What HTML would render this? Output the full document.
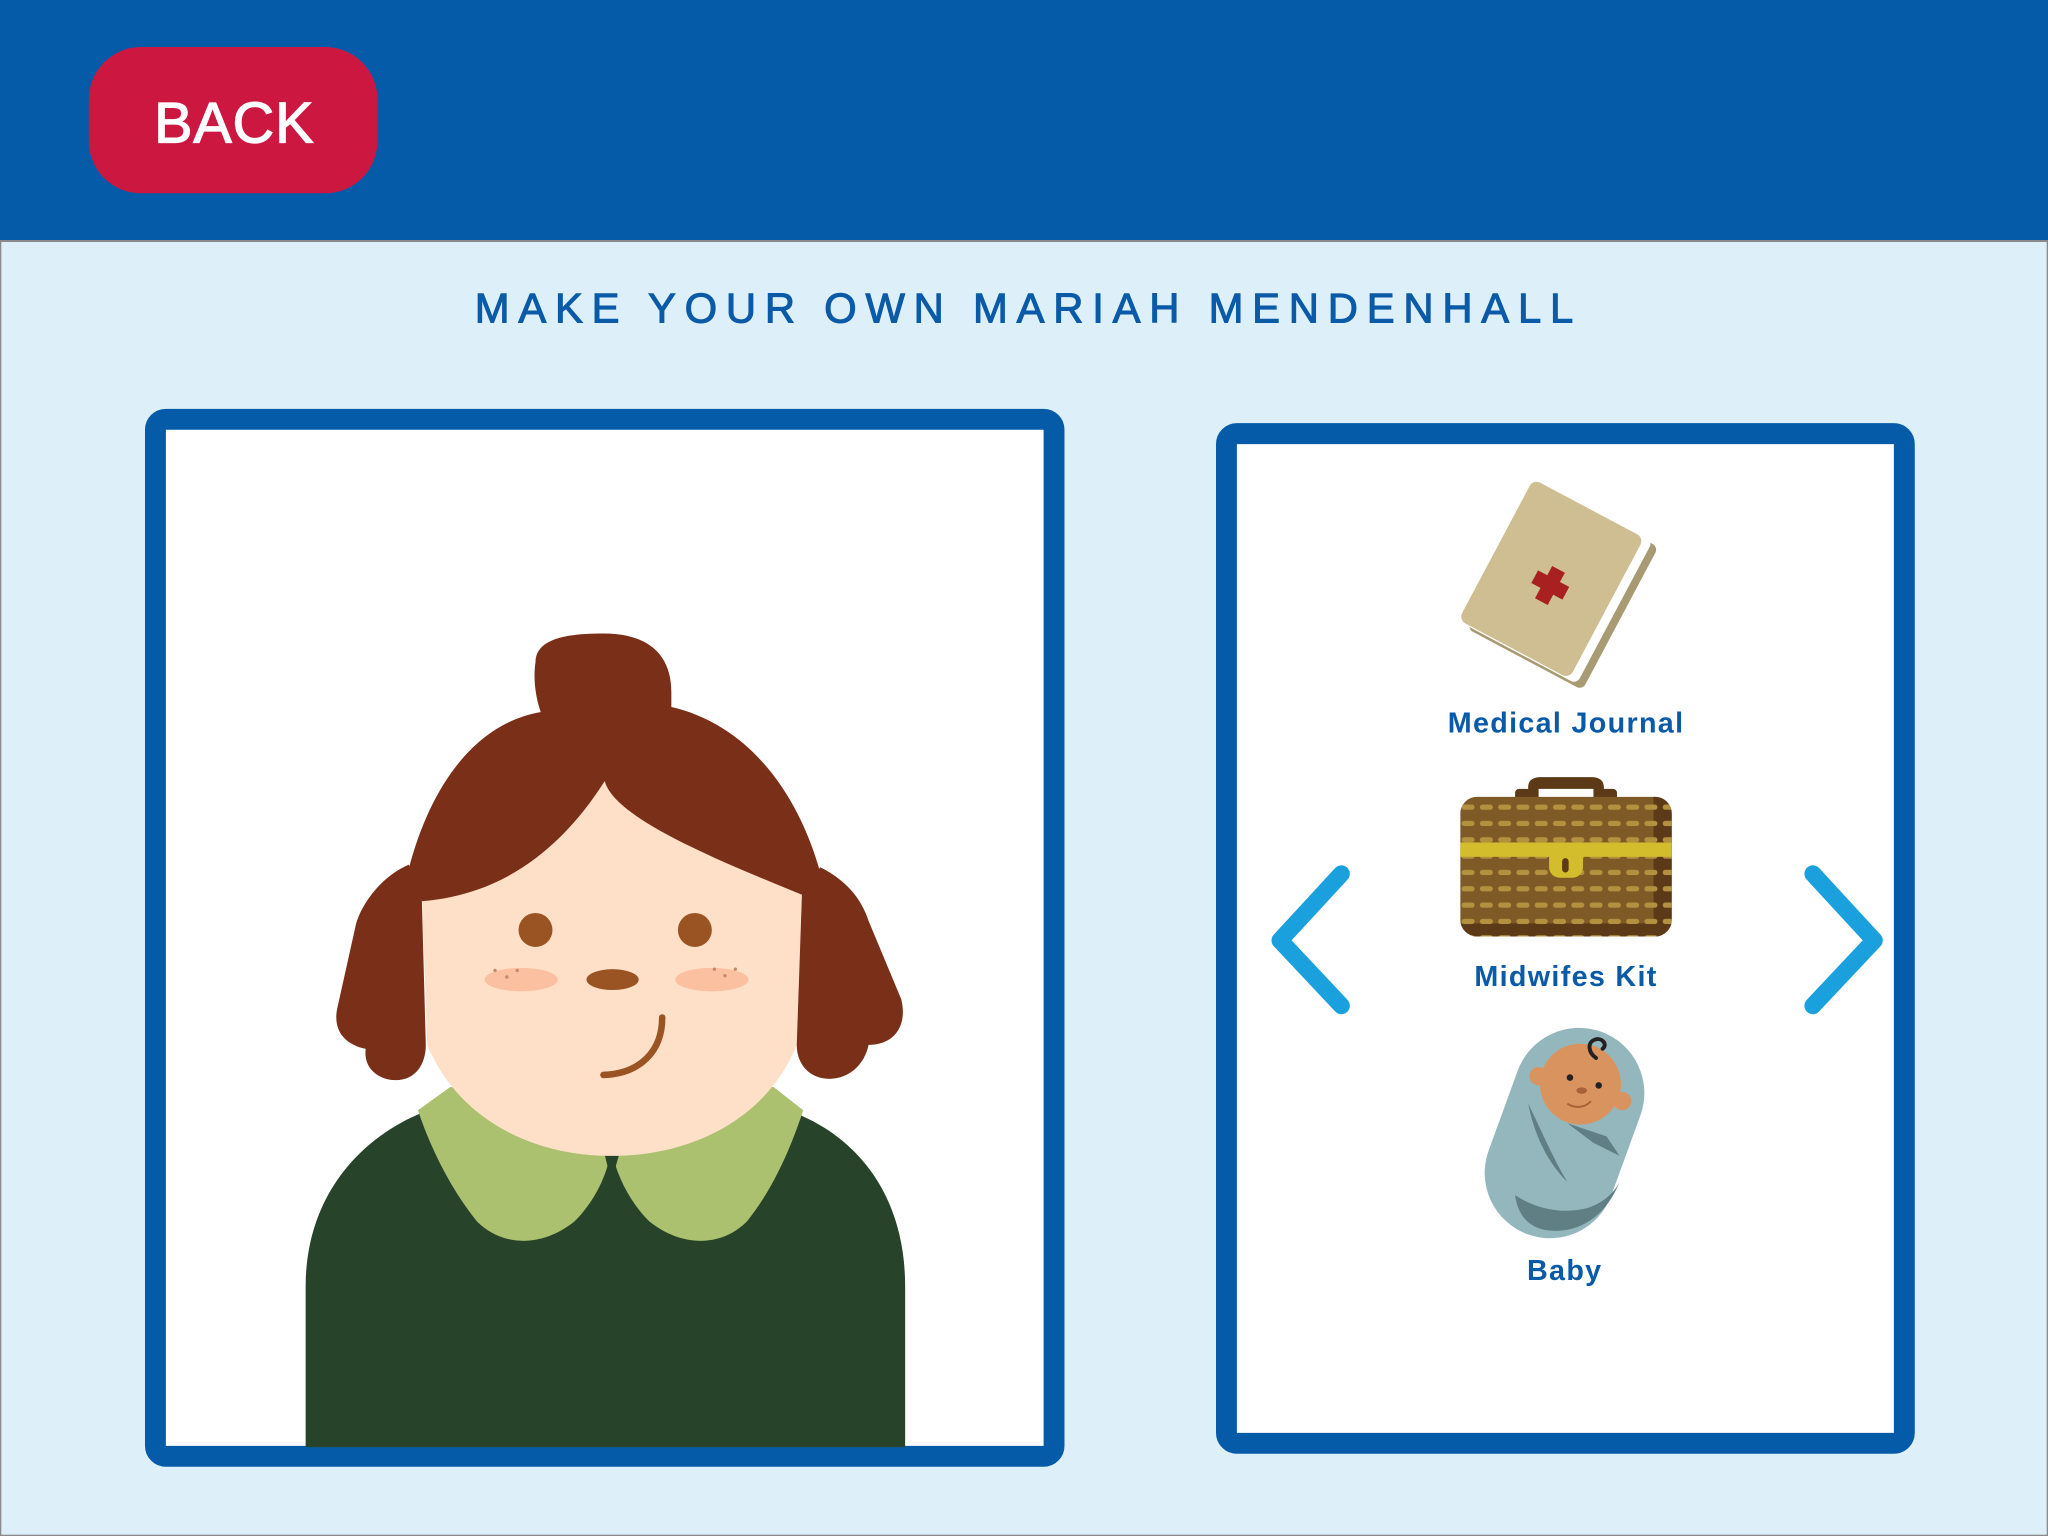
<!DOCTYPE html>
<html><head><meta charset="utf-8"><style>
html,body{margin:0;padding:0;width:2048px;height:1536px;overflow:hidden;background:#DDF0FA}
svg{display:block}
</style></head><body>
<svg width="2048" height="1536" viewBox="0 0 1568 1176" xmlns="http://www.w3.org/2000/svg">
<defs>
<pattern id="dash" x="1118" y="612" width="14" height="12.5" patternUnits="userSpaceOnUse">
<rect x="1" y="4" width="10" height="4" rx="2" fill="#B3913F"/>
</pattern>
<clipPath id="kitclip"><rect x="1118" y="610" width="162" height="107" rx="13"/></clipPath>
</defs>
<rect x="0" y="0" width="1568" height="1176" fill="#DDF0FA" stroke="#8a8a8a" stroke-width="2"/>
<rect x="0" y="0" width="1568" height="184" fill="#065BA8"/>
<line x1="0" y1="184.5" x2="1568" y2="184.5" stroke="#8a8a8a" stroke-width="1.5"/>
<rect x="68" y="36" width="221" height="112" rx="40" fill="#CC1840"/>
<text x="179" y="109" text-anchor="middle" font-family="Liberation Sans, sans-serif" font-size="44" fill="#fff" stroke="#fff" stroke-width="1" textLength="122" lengthAdjust="spacing">BACK</text>
<text x="784" y="247" text-anchor="middle" font-family="Liberation Sans, sans-serif" font-size="32" fill="#0A5AA8" stroke="#0A5AA8" stroke-width="0.8" textLength="841" lengthAdjust="spacing">MAKE YOUR OWN MARIAH MENDENHALL</text>

<!-- left panel -->
<rect x="119" y="321" width="688" height="794" rx="8" fill="#fff" stroke="#065BA8" stroke-width="16"/>
<!-- body -->
<path d="M234 1108 V985 C234 905 290 858 345 845 H585 C645 858 693 905 693 985 V1108 Z" fill="#27432A"/>
<!-- collar -->
<path d="M345 832 L320 850 C330 880 345 910 365 935 C385 955 415 955 440 935 C455 920 465 900 468 880 L400 850 Z" fill="#ABC16F"/>
<path d="M592 832 L615 850 C605 880 592 910 572 935 C552 955 522 955 497 935 C482 920 472 900 468 880 L536 850 Z" fill="#ABC16F"/>
<path d="M463 884 L468 905 L474 884 Z" fill="#27432A"/>
<!-- face -->
<path d="M323 680 L327 800 C350 855 405 885 468 885 C532 885 588 855 610 800 L614 680 L468 590 Z" fill="#FEE0C8"/>
<!-- hair -->
<path d="M410 507 C410 487 440 485 462 485 C495 485 514 500 514 530 L514 545 L415 548 C410 535 408 520 410 507 Z" fill="#7A2F18"/>
<path d="M313 665 C330 600 365 553 415 545 L513 541 C575 555 612 610 628 668 L614 685 C540 655 470 625 463 598 C430 650 385 685 323 690 Z" fill="#7A2F18"/>
<path d="M313 662 C290 672 275 695 272 710 L258 773 C255 790 265 800 280 803 C278 818 290 827 303 827 C318 827 326 815 326 800 L323 690 Z" fill="#7A2F18"/>
<path d="M628 664 C650 675 660 690 665 705 L690 765 C695 785 685 800 665 800 C662 815 650 826 635 826 C620 826 610 815 610 800 L614 684 Z" fill="#7A2F18"/>
<!-- features -->
<ellipse cx="410" cy="712" rx="13" ry="13" fill="#9A5424"/>
<ellipse cx="532" cy="712" rx="13" ry="13" fill="#9A5424"/>
<ellipse cx="399" cy="750" rx="28" ry="9" fill="#FAC0A0"/>
<ellipse cx="545" cy="750" rx="28" ry="9" fill="#FAC0A0"/>
<g fill="#C58A6C"><circle cx="379" cy="743" r="1.3"/><circle cx="388" cy="748" r="1.3"/><circle cx="396" cy="743" r="1.3"/><circle cx="547" cy="742" r="1.3"/><circle cx="555" cy="747" r="1.3"/><circle cx="563" cy="742" r="1.3"/></g>
<ellipse cx="469" cy="750" rx="20" ry="8" fill="#9A5424"/>
<path d="M507 779 C507 805 490 822 462 823" fill="none" stroke="#9A5424" stroke-width="5" stroke-linecap="round"/>

<!-- right panel -->
<rect x="939" y="332" width="519" height="773" rx="8" fill="#fff" stroke="#065BA8" stroke-width="16"/>
<!-- book -->
<g transform="rotate(28 1193 446)">
<rect x="1148" y="386" width="100" height="124" rx="5" fill="#A89A72"/>
<rect x="1144" y="384" width="98" height="124" rx="5" fill="#fff"/>
<rect x="1139" y="385" width="96" height="122" rx="6" fill="#CEBE91"/>
<rect x="1183" y="437" width="11" height="28" fill="#A8201F"/>
<rect x="1175" y="445" width="27" height="11" fill="#A8201F"/>
</g>
<text x="1199" y="561" text-anchor="middle" font-family="Liberation Sans, sans-serif" font-weight="bold" font-size="22" fill="#0A5AA8" letter-spacing="1">Medical Journal</text>
<!-- kit -->
<path d="M1170 612 V603 C1170 597 1174 595 1180 595 H1218 C1224 595 1228 597 1228 603 V612 H1220 V604 H1178 V612 Z" fill="#5C3A18"/>
<rect x="1160" y="604" width="12" height="10" rx="3" fill="#5C3A18"/>
<rect x="1226" y="604" width="12" height="10" rx="3" fill="#5C3A18"/>
<g clip-path="url(#kitclip)">
<rect x="1118" y="610" width="162" height="107" fill="#7E5A26"/>
<rect x="1266" y="610" width="14" height="107" fill="#5C3A18"/>
<rect x="1118" y="707" width="162" height="10" fill="#5C3A18"/>
<rect x="1118" y="610" width="162" height="107" fill="url(#dash)"/>
<rect x="1118" y="645" width="162" height="11" fill="#D3BD2C"/>
</g>
<rect x="1186" y="648" width="26" height="24" rx="8" fill="#D3BD2C"/>
<rect x="1196" y="657" width="5" height="11" rx="2.5" fill="#5C3A18"/>
<text x="1199" y="755" text-anchor="middle" font-family="Liberation Sans, sans-serif" font-weight="bold" font-size="22" fill="#0A5AA8" letter-spacing="1">Midwifes Kit</text>
<!-- arrows -->
<path d="M1027 669 L980 720 L1027 770" fill="none" stroke="#1BA0DE" stroke-width="13" stroke-linecap="round" stroke-linejoin="round"/>
<path d="M1388 669 L1435 720 L1388 770" fill="none" stroke="#1BA0DE" stroke-width="13" stroke-linecap="round" stroke-linejoin="round"/>
<!-- baby -->
<rect x="1148" y="785" width="100" height="165" rx="50" fill="#94B7BE" transform="rotate(20 1198 867)"/>
<path d="M1160 915 C1175 925 1195 930 1215 925 C1225 922 1235 915 1240 905 C1230 930 1210 945 1185 942 C1170 940 1162 930 1160 915 Z" fill="#607F85"/>
<path d="M1170 845 C1175 870 1185 890 1200 905 C1188 885 1180 865 1170 845 Z" fill="#607F85"/>
<path d="M1200 860 L1230 870 L1240 885 L1220 875 Z" fill="#607F85"/>
<circle cx="1178" cy="824" r="7" fill="#D9935E"/>
<circle cx="1242" cy="843" r="7" fill="#D9935E"/>
<circle cx="1210" cy="830" r="31" fill="#D9935E"/>
<path d="M1222 810 C1216 806 1215 798 1221 796 C1227 794 1231 800 1227 803" fill="none" stroke="#222" stroke-width="3" stroke-linecap="round"/>
<circle cx="1202" cy="825" r="2.5" fill="#222"/>
<circle cx="1224" cy="831" r="2.5" fill="#222"/>
<ellipse cx="1211" cy="835" rx="4" ry="2.5" fill="#A8623A"/>
<path d="M1200 845 C1206 849 1214 848 1218 843" fill="none" stroke="#A8623A" stroke-width="1.5"/>
<text x="1198" y="980" text-anchor="middle" font-family="Liberation Sans, sans-serif" font-weight="bold" font-size="22" fill="#0A5AA8" letter-spacing="1">Baby</text>
</svg>
</body></html>
